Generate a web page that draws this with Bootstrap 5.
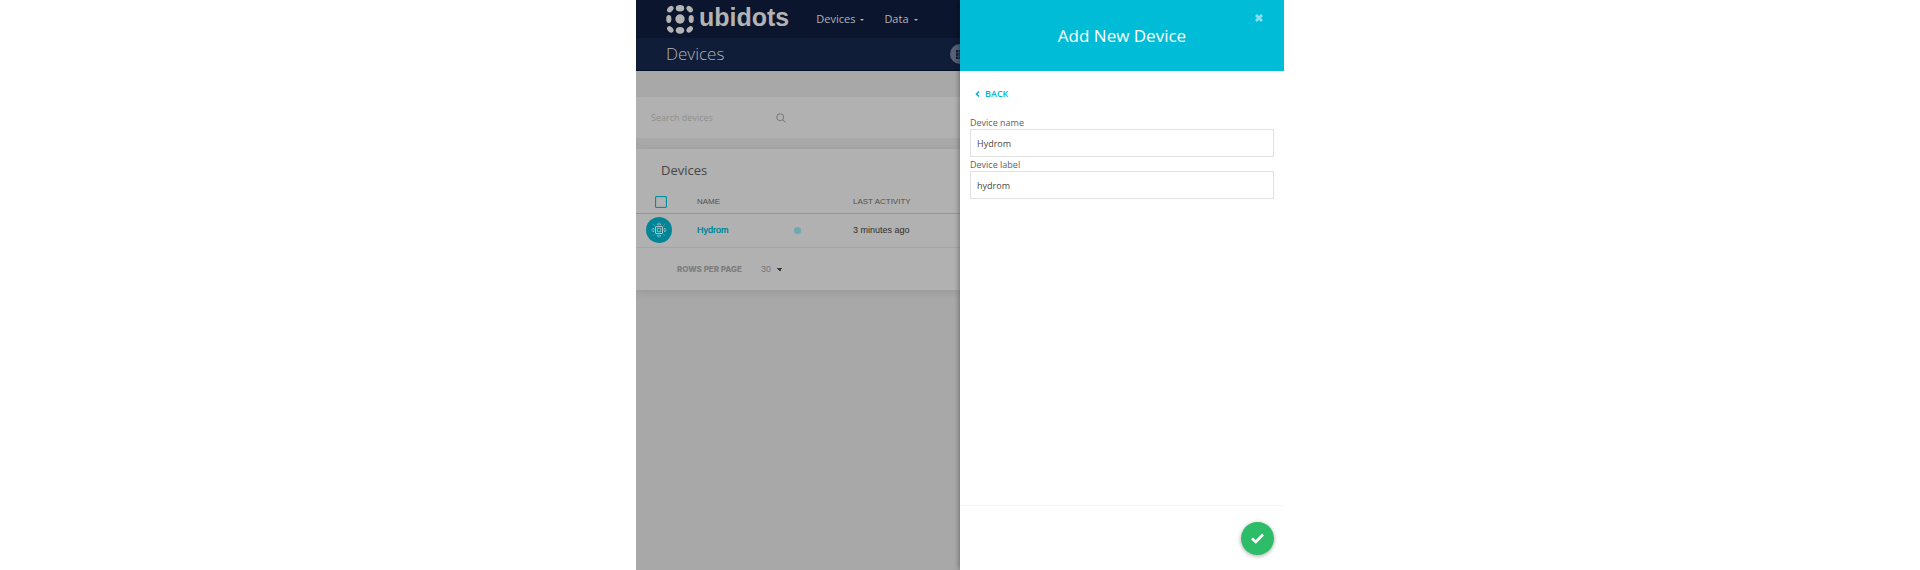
<!DOCTYPE html>
<html lang="en">
<head>
<meta charset="utf-8">
<meta name="viewport" content="width=device-width, initial-scale=1">
<title>Add New Device</title>
<link href="https://cdn.jsdelivr.net/npm/bootstrap@5.3.0/dist/css/bootstrap.min.css" rel="stylesheet">
<style>
  body { font-family: "Open Sans", "Noto Sans", sans-serif; font-size: 9px; line-height: 14px; color: #4c4c4c; background: #fff; }
  .shell { max-width: 648px; min-height: 100vh; }
  .pane { width: 50%; }
  .backdrop-pane { background: #a8a8a8; }
  .topbar { height: 38px; background: #0b152d; padding-left: 30px; }
  .brand-mark { display: block; margin-top: 4px; }
  .brand-name { font: bold 25px/32px "Liberation Sans", sans-serif; color: #b3b3b3; margin: 1px 0 0 4px; }
  .menu { gap: 20px; margin-left: 27px; }
  .menu-link { font-size: 11px; color: #b3b3b3; text-decoration: none; }
  .tri { width: 0; border: solid transparent; border-width: 2px 2px 0; border-top-color: currentColor; margin: 2px 0 0 5px; }
  .subbar { height: 33px; background: #101d38; border-bottom: 1px solid #060e26; padding-left: 30px; }
  .subbar h1 { font-size: 17px; font-weight: 300; line-height: 22px; color: #b3b3b3; }
  .grid-btn { width: 20px; height: 20px; background: #586176; margin-right: -10px; }
  .searchbar { height: 41px; margin-top: 26px; background: #b1b1b1; padding-left: 15px; }
  .searchbar input { width: 125px; border: 0; padding: 0; background: transparent; color: #8c8c8c; outline: 0; }
  .searchbar input::placeholder { color: #8f8f8f; opacity: 1; }
  .devices { margin-top: 11px; background: #b1b1b1; box-shadow: 0 2px 8px rgba(0,0,0,.1); }
  .devices h2 { font-size: 13px; font-weight: 400; line-height: 20px; padding: 11px 0 0 25px; color: #464646; }
  .dev-table { font-family: "Liberation Sans", sans-serif; table-layout: fixed; }
  .dev-table th { font-size: 8px; font-weight: 400; height: 33px; padding: 12px 0 0; border-bottom: 1px solid #949494; color: #505050; }
  .dev-table td { height: 34px; padding: 0; border-bottom: 1px solid #a5a5a5; color: #2f2f2f; }
  .dev-table .strong-text { text-shadow: 0 0 0 currentColor; }
  .dev-table a { color: #008597; text-decoration: none; }
  .col-pick { width: 61px; } .col-name { width: 96px; } .col-state { width: 60px; }
  .pick { appearance: none; display: block; width: 12px; height: 12px; margin: 0 0 0 19px; border: 1px solid #008ea0; border-radius: 1px; box-shadow: inset 0 0 1px #008ea0; }
  .chip { display: block; margin-left: 10px; }
  .state { display: block; width: 7px; height: 7px; border-radius: 50%; background: #6aaab0; margin-left: 1px; }
  .pager { height: 42px; padding-left: 41px; color: #7d7d7d; font-size: 8px; }
  .pager label { font-family: Inter, sans-serif; font-weight: 800; }
  .pager select { appearance: none; width: 24px; margin-left: 19px; padding: 0; border: 0; color: #777; font: 9px/14px "Liberation Sans", sans-serif;
    background: linear-gradient(45deg, transparent 50%, #3b3b3b 50%) 16px 6px / 3px 3px no-repeat, linear-gradient(-45deg, transparent 50%, #3b3b3b 50%) 19px 6px / 3px 3px no-repeat; }
  .drawer { background: #fff; box-shadow: -1px 0 5px rgba(0,0,0,.35); z-index: 1; }
  .drawer-head { height: 71px; background: #00bcd7; }
  .drawer-head h2 { font-size: 17px; font-weight: 400; line-height: 24px; color: #fff; }
  .close-x { top: 14px; right: 20px; width: 9px; height: 9px; border: 0; padding: 0; background: none; }
  .fields { padding: 0 10px; }
  .back { color: #00b5cf; border: 0; background: none; padding: 0; margin: 16px 0 14px 5px; font-weight: 600; gap: 5px; }
  .drawer label { display: block; line-height: 12px; padding-top: 2px; color: #616161; }
  .drawer input { display: block; width: 100%; height: 28px; padding: 0 6px; border: 1px solid #e1e1e1; color: #484848; outline: 0; }
  .drawer-foot { height: 65px; border-top: 1px solid #f3f3f3; padding: 0 10px 0 0; }
  .ok { width: 33px; height: 33px; padding: 0; border: 0; background: #2dbd68; box-shadow: 0 1px 4px rgba(0,0,0,.35); }
</style>
</head>
<body>
<div class="shell d-flex mx-auto overflow-hidden">
  <main class="pane backdrop-pane">
    <nav class="topbar d-flex align-items-center">
      <a href="#" class="d-flex align-items-start align-self-start text-decoration-none">
        <svg class="brand-mark" width="29" height="30" viewBox="0 0 29 30" fill="#b3b3b3">
          <ellipse cx="14" cy="4.300" rx="4.200" ry="3.200"/><circle cx="14" cy="15" r="4.700"/><ellipse cx="14" cy="26.300" rx="4.200" ry="3.400"/>
          <ellipse cx="2.800" cy="15" rx="2.600" ry="4"/><ellipse cx="25.200" cy="15" rx="2.600" ry="4"/>
          <ellipse cx="4.300" cy="5.200" rx="3.700" ry="2.600" transform="rotate(-45 4.300 5.200)"/><ellipse cx="23.700" cy="5.200" rx="3.700" ry="2.600" transform="rotate(45 23.700 5.200)"/>
          <ellipse cx="4.300" cy="25.400" rx="3.700" ry="2.600" transform="rotate(45 4.300 25.400)"/><ellipse cx="23.700" cy="25.400" rx="3.700" ry="2.600" transform="rotate(-45 23.700 25.400)"/>
        </svg>
        <span class="brand-name">ubidots</span>
      </a>
      <div class="menu d-flex">
        <a href="#" class="menu-link d-flex align-items-center">Devices<span class="tri"></span></a>
        <a href="#" class="menu-link d-flex align-items-center">Data<span class="tri"></span></a>
      </div>
    </nav>
    <header class="subbar d-flex align-items-center justify-content-between">
      <h1 class="m-0">Devices</h1>
      <button type="button" class="grid-btn btn rounded-circle p-0 border-0 d-flex align-items-center justify-content-center" aria-label="Grid view">
        <svg width="9" height="9" viewBox="0 0 9 9" fill="#101d38"><path d="M0 0h2.500v2.500H0zM3.300 0h2.500v2.500H3.300zM6.500 0H9v2.500H6.500zM0 3.300h2.500v2.500H0zM3.300 3.300h2.500v2.500H3.300zM6.500 3.300H9v2.500H6.500zM0 6.500h2.500V9H0zM3.300 6.500h2.500V9H3.300zM6.500 6.500H9V9H6.500z"/></svg>
      </button>
    </header>
    <form class="searchbar d-flex align-items-center">
      <input type="text" placeholder="Search devices" aria-label="Search devices">
      <svg width="10" height="10" viewBox="0 0 10 10" fill="none" stroke="#777"><circle cx="4.200" cy="4.200" r="3.500"/><path d="M6.800 6.800L9.500 9.500"/></svg>
    </form>
    <section class="devices">
      <h2 class="m-0">Devices</h2>
      <table class="dev-table w-100">
        <colgroup><col class="col-pick"><col class="col-name"><col class="col-state"><col></colgroup>
        <thead><tr><th><input type="checkbox" class="pick" aria-label="Select all"></th><th>NAME</th><th></th><th>LAST ACTIVITY</th></tr></thead>
        <tbody><tr>
          <td><svg class="chip" width="26" height="26" viewBox="0 0 26 26" fill="none" stroke="#a9c4c8"><circle cx="13" cy="13" r="13" fill="#008597" stroke="none"/><rect x="9.500" y="9.500" width="7" height="7" rx=".5"/><path stroke-width=".8" d="M11.300 11.300h3.400v3.400h-3.400zM11.500 8V6.500M13 8.500V5.500M14.500 8V6.500M11.500 18v1.500M13 17.500v3M14.500 18v1.500M8 11.500H6.500M8.500 13H5.500M8 14.500H6.500M18 11.500h1.500M17.500 13h3M18 14.500h1.500M8.500 8.500l-1-1M17.500 8.500l1-1M8.500 17.500l-1 1M17.500 17.500l1 1"/></svg></td>
          <td><a href="#" class="strong-text">Hydrom</a></td>
          <td><span class="state"></span></td>
          <td>3 minutes ago</td>
        </tr></tbody>
      </table>
      <div class="pager d-flex align-items-center">
        <label for="rows">ROWS PER PAGE</label>
        <select id="rows"><option>30</option></select>
      </div>
    </section>
  </main>
  <aside class="pane drawer d-flex flex-column position-relative">
    <header class="drawer-head d-flex align-items-center justify-content-center">
      <h2 class="m-0">Add New Device</h2>
      <button type="button" class="close-x position-absolute d-flex" aria-label="Close"><svg width="8" height="8" viewBox="0 0 8 8" stroke="#8be0ec" stroke-width="2.800"><path d="M1 1l6 6M7 1L1 7"/></svg></button>
    </header>
    <form class="flex-grow-1 fields">
      <button type="button" class="back d-flex align-items-center"><svg width="5" height="6" viewBox="0 0 5 6" fill="none" stroke="currentColor" stroke-width="1.500"><path d="M4 .5L1.500 3L4 5.500"/></svg>BACK</button>
      <label for="dname">Device name</label>
      <input id="dname" type="text" value="Hydrom">
      <label for="dlabel">Device label</label>
      <input id="dlabel" type="text" value="hydrom">
    </form>
    <footer class="drawer-foot d-flex align-items-center justify-content-end">
      <button type="button" class="ok rounded-circle d-flex align-items-center justify-content-center" aria-label="Save"><svg width="13" height="11" viewBox="0 0 13 11" fill="none" stroke="#fff" stroke-width="2.600"><path d="M1 5.500L4.800 9L12 1.500"/></svg></button>
    </footer>
  </aside>
</div>
<script src="https://cdn.jsdelivr.net/npm/bootstrap@5.3.0/dist/js/bootstrap.bundle.min.js"></script>
</body>
</html>
